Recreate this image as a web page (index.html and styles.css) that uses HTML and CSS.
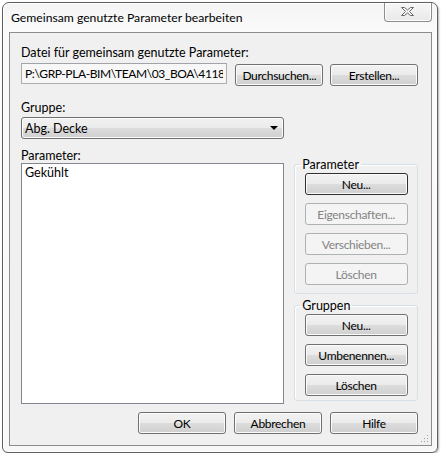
FILE: index.html
```html
<!DOCTYPE html>
<html lang="de">
<head>
<meta charset="UTF-8">
<title>Gemeinsam genutzte Parameter bearbeiten</title>
<link rel="stylesheet" href="styles.css">
</head>
<body>

<div class="window">
    <div class="titlebar">
        <span class="title">Gemeinsam genutzte Parameter bearbeiten</span>
        <div class="close">
            <svg width="14" height="10" viewBox="0 0 14 10">
                <polygon points="0.5,0.5 3.5,0.5 6.5,3 9.5,0.5 12.5,0.5 8.5,4.5 12.5,8.5 9.5,8.5 6.5,6 3.5,8.5 0.5,8.5 4.5,4.5" fill="#f4f4f4" stroke="#666" stroke-width="1" stroke-linejoin="round"/>
            </svg>
        </div>
    </div>

    <div class="client">
        <div class="label">Datei für gemeinsam genutzte Parameter:</div>
        <div class="file-row">
            <input type="text" class="path" readonly value="P:\GRP-PLA-BIM\TEAM\03_BOA\4118_ATP\Parameter.txt">
            <button class="btn">Durchsuchen...</button>
            <button class="btn">Erstellen...</button>
        </div>

        <div class="label gap-label">Gruppe:</div>
        <div class="combo">
            <span>Abg. Decke</span>
            <span class="arrow"></span>
        </div>

        <div class="main">
            <div class="left">
                <div class="label">Parameter:</div>
                <div class="listbox">
                    <div class="item">Gekühlt</div>
                </div>
            </div>
            <div class="right">
                <fieldset class="group group-param">
                    <legend>Parameter</legend>
                    <div class="group-body">
                        <button class="btn wide default">Neu...</button>
                        <button class="btn wide" disabled>Eigenschaften...</button>
                        <button class="btn wide" disabled>Verschieben...</button>
                        <button class="btn wide" disabled>Löschen</button>
                    </div>
                </fieldset>
                <fieldset class="group group-groups">
                    <legend>Gruppen</legend>
                    <div class="group-body">
                        <button class="btn wide">Neu...</button>
                        <button class="btn wide">Umbenennen...</button>
                        <button class="btn wide">Löschen</button>
                    </div>
                </fieldset>
            </div>
        </div>

        <div class="footer">
            <button class="btn">OK</button>
            <button class="btn">Abbrechen</button>
            <button class="btn">Hilfe</button>
        </div>

        <svg class="grip" width="8" height="8" viewBox="0 0 8 8">
            <rect x="6" y="0" width="1" height="1" fill="#a0a0a0"/>
            <rect x="3" y="3" width="1" height="1" fill="#a0a0a0"/>
            <rect x="6" y="3" width="1" height="1" fill="#a0a0a0"/>
            <rect x="0" y="6" width="1" height="1" fill="#a0a0a0"/>
            <rect x="3" y="6" width="1" height="1" fill="#a0a0a0"/>
            <rect x="6" y="6" width="1" height="1" fill="#a0a0a0"/>
        </svg>
    </div>
</div>

</body>
</html>
```

FILE: styles.css
```css
body { margin:0; background:#fff; font-family: Lato, "Open Sans", sans-serif; font-size: 12.5px; color:#000; }

.window {
    margin: 2px 0 0 2px;
    width: 436px;
    height: 451px;
    box-sizing: border-box;
    border: 1px solid #5f5f5f;
    border-radius: 7px 7px 6px 6px;
    background: linear-gradient(#f4f4f4, #fbfbfb 30px, #f8f8f8);
    box-shadow: 1px 1px 2px rgba(0,0,0,.3), inset 0 0 0 1px #fff;
}

.titlebar { height: 29px; display: flex; align-items: flex-start; }
.title { padding-left: 8px; line-height: 29px; font-size: 12.2px; }
.close {
    margin-left: auto;
    margin-right: 5px;
    width: 48px;
    height: 19px;
    box-sizing: border-box;
    border: 1px solid #8d8d8d;
    border-top: none;
    border-radius: 0 0 4px 4px;
    background: linear-gradient(#f6f6f6, #e9e9e9);
    box-shadow: inset 0 0 0 1px #fff;
    display: flex;
    align-items: center;
    justify-content: center;
}

.client {
    position: relative;
    margin-left: 6px;
    width: 423px;
    height: 414px;
    box-sizing: border-box;
    border: 1px solid #8c8c8c;
    background: #f0f0f0;
    padding: 12px 13px 0 11px;
}

.label { line-height: 15px; }
.gap-label { margin-top: 14px; }

.file-row { display: flex; align-items: flex-start; margin-top: 3px; }
.file-row .btn { margin-top: 1px; }
.path {
    width: 207px;
    height: 21px;
    box-sizing: border-box;
    border: 1px solid #abadb3;
    border-top-color: #a0a3aa;
    background: #f7f7f7;
    padding: 0 3px;
    margin: 0 8px 0 0;
    font: inherit;
    font-size: 12px;
    letter-spacing: -0.4px;
    color: #000;
    outline: none;
}
.file-row .btn + .btn { margin-left: 7px; }

.btn {
    width: 88px;
    height: 22px;
    box-sizing: border-box;
    border: 1px solid #707070;
    border-radius: 3px;
    background: linear-gradient(#f2f2f2, #ebebeb 50%, #dddddd 50%, #cfcfcf);
    box-shadow: inset 0 0 0 1px #fbfbfb;
    font: inherit;
    font-size: 12px;
    letter-spacing: -0.3px;
    color: #000;
    padding: 0;
}
.btn.wide { width: 103px; }
.btn.default { border-color: #2f2f2f; }
.btn:disabled {
    border-color: #adb2b5;
    background: #f4f4f4;
    box-shadow: none;
    color: #838383;
}

.combo {
    margin-top: 2px;
    width: 263px;
    height: 22px;
    box-sizing: border-box;
    border: 1px solid #707070;
    border-radius: 3px;
    background: linear-gradient(#f2f2f2, #ebebeb 50%, #dddddd 50%, #cfcfcf);
    box-shadow: inset 0 0 0 1px #fbfbfb;
    display: flex;
    align-items: center;
    justify-content: space-between;
    padding: 0 5px 0 3px;
}
.arrow { width: 0; height: 0; border-left: 4px solid transparent; border-right: 4px solid transparent; border-top: 4px solid #000; }

.main { display: flex; margin-top: 9px; }
.left { width: 264px; margin-right: 10px; }
.listbox {
    height: 241px;
    box-sizing: border-box;
    border: 1px solid #828790;
    background: #fff;
    padding: 1px 3px;
}
.item { line-height: 15px; }

.right { width: 124px; padding-top: 9px; }
.group {
    margin: 0;
    padding: 1px 0 0 0;
    border: 1px solid #d5dfe5;
    border-radius: 3px;
    box-sizing: border-box;
    box-shadow: inset 1px 1px 0 #fff;
}
.group legend { margin-left: 5px; padding: 0 2px; line-height: 15px; }
.group-param { height: 137px; }
.group-groups { height: 103px; margin-top: 4px; }
.group-body { display: flex; flex-direction: column; align-items: center; gap: 8px; }

.footer { display: flex; justify-content: flex-end; gap: 8px; margin-top: 8px; }

.grip { position: absolute; right: 2px; bottom: 2px; }
```
